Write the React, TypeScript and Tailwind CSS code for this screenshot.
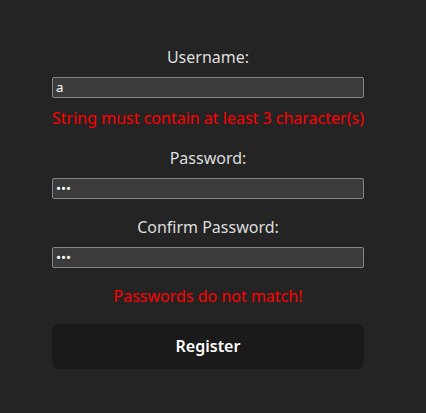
import React from "react";

const font = { fontFamily: '"Noto Sans", "Open Sans", sans-serif' };

export default function App() {
  const inputCls =
    "block w-full h-[21px] px-[3px] text-[13.33px] leading-none bg-[#3b3b3b] border border-[#858585] rounded-[2px] text-white outline-none";
  return (
    <div
      className="min-h-screen w-full bg-[#242424] flex items-center pl-[52px] text-[16px] leading-[24px] text-[#dedede]"
      style={font}
    >
      <div className="w-[312px] flex flex-col gap-4">
        <div className="flex flex-col gap-2">
          <div className="text-center">Username:</div>
          <input className={inputCls} style={font} defaultValue="a" />
          <div className="text-center text-[#ff0000]">String must contain at least 3 character(s)</div>
        </div>
        <div className="flex flex-col gap-2">
          <div className="text-center">Password:</div>
          <input className={inputCls} style={font} type="password" defaultValue="abc" />
        </div>
        <div className="flex flex-col gap-2">
          <div className="text-center">Confirm Password:</div>
          <input className={inputCls} style={font} type="password" defaultValue="abc" />
        </div>
        <div className="text-center text-[#ff0000]">Passwords do not match!</div>
        <button
          className="h-[45px] w-full rounded-[8px] bg-[#1a1a1a] border border-transparent font-semibold text-white"
          style={font}
        >
          Register
        </button>
      </div>
    </div>
  );
}
